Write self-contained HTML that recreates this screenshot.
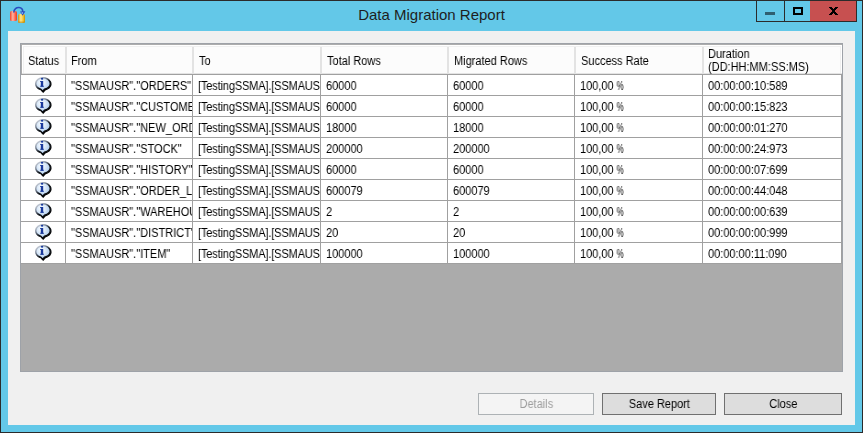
<!DOCTYPE html>
<html><head><meta charset="utf-8"><style>
html,body{margin:0;padding:0;width:863px;height:433px;overflow:hidden;background:#f0f0f0;}
body>div,#w>div{position:absolute;}
#w{position:absolute;left:0;top:0;width:863px;height:433px;}
#w div{position:absolute;}
#w div span{position:static;}
.g{display:inline-block;font-size:12px;transform:scaleX(0.9167);transform-origin:0 0;will-change:transform;}
.t{font-family:"Liberation Sans",sans-serif;color:#000;white-space:nowrap;}
svg{display:block;}
</style></head><body><div id="w">
<div style="left:0px;top:0px;width:863px;height:433px;background:#2b2b2b;"></div>
<div style="left:1px;top:1px;width:861px;height:431px;background:#63c8e8;"></div>
<div style="left:8px;top:31px;width:847px;height:394px;background:#f0f0f0;"></div>
<div class="t" style="left:0;top:5px;width:863px;text-align:center;font-size:15px;color:#1e1e1e;line-height:20px;">Data Migration Report</div>
<div style="left:756px;top:0px;width:101px;height:22px;background:#2b2b2b;"></div>
<div style="left:757px;top:1px;width:27px;height:20px;background:#63c8e8;"></div>
<div style="left:785px;top:1px;width:25px;height:20px;background:#63c8e8;"></div>
<div style="left:810px;top:1px;width:46px;height:20px;background:#c75050;"></div>
<div style="left:765px;top:12px;width:10px;height:3px;background:#2f5f70;"></div>
<div style="left:793px;top:7px;width:10px;height:8px;background:transparent;border:2px solid #000;box-sizing:border-box;"></div>
<svg style="position:absolute;left:829px;top:7px" width="9" height="8" viewBox="0 0 9 8" shape-rendering="crispEdges" fill="#000"><rect x="0" y="0" width="3" height="1"/><rect x="6" y="0" width="3" height="1"/><rect x="1" y="1" width="3" height="1"/><rect x="5" y="1" width="3" height="1"/><rect x="2" y="2" width="5" height="1"/><rect x="3" y="3" width="3" height="1"/><rect x="3" y="4" width="3" height="1"/><rect x="2" y="5" width="5" height="1"/><rect x="1" y="6" width="3" height="1"/><rect x="5" y="6" width="3" height="1"/><rect x="0" y="7" width="3" height="1"/><rect x="6" y="7" width="3" height="1"/></svg>
<svg style="position:absolute;left:8px;top:6px" width="20" height="18" viewBox="0 0 20 18"><defs><linearGradient id="rd" x1="0" x2="1"><stop offset="0" stop-color="#f04424"/><stop offset="0.4" stop-color="#ffb4a4"/><stop offset="0.75" stop-color="#ff6448"/><stop offset="1" stop-color="#e63c22"/></linearGradient><linearGradient id="yl" x1="0" x2="1"><stop offset="0" stop-color="#cc9412"/><stop offset="0.4" stop-color="#ffe88c"/><stop offset="0.75" stop-color="#f2c232"/><stop offset="1" stop-color="#c48a00"/></linearGradient></defs><rect x="2" y="5" width="7" height="10" rx="1.6" fill="url(#rd)"/><rect x="10" y="8" width="7" height="9" rx="1.6" fill="url(#yl)"/><rect x="10.5" y="15.6" width="6" height="1.2" fill="#b07800" opacity="0.6"/><path d="M5.8 6.6C5.8 2.8 8.6 1.3 11 1.5C13.4 1.7 14.8 3.4 14.8 6" stroke="#2a4cc0" stroke-width="1.6" fill="none"/><path d="M12 5.6L17.4 5.3L14.6 9.8Z" fill="#2a4cc0"/><circle cx="14.3" cy="7" r="0.9" fill="#7aa8f0"/></svg>
<div style="left:20px;top:43px;width:823px;height:329px;background:#9ea2a8;"></div>
<div style="left:21px;top:44px;width:821px;height:327px;background:#ababab;"></div>
<div style="left:21px;top:44px;width:821px;height:31px;background:#fcfcfc;"></div>
<div style="left:21px;top:44px;width:821px;height:1px;background:#adadad;"></div>
<div style="left:21px;top:44px;width:1px;height:30px;background:#adadad;"></div>
<div style="left:22px;top:45px;width:820px;height:1px;background:#ffffff;"></div>
<div style="left:22px;top:45px;width:1px;height:28px;background:#ffffff;"></div>
<div style="left:23px;top:46px;width:817px;height:1px;background:#f0f0f0;"></div>
<div style="left:23px;top:46px;width:1px;height:27px;background:#f0f0f0;"></div>
<div style="left:840px;top:46px;width:1px;height:27px;background:#f0f0f0;"></div>
<div style="left:841px;top:45px;width:1px;height:28px;background:#ffffff;"></div>
<div style="left:22px;top:73px;width:820px;height:1px;background:#e3e3e3;"></div>
<div style="left:21px;top:74px;width:821px;height:1px;background:#a0a0a0;"></div>
<div style="left:65px;top:47px;width:2px;height:26px;background:#e3e3e3;"></div>
<div style="left:192px;top:47px;width:2px;height:26px;background:#e3e3e3;"></div>
<div style="left:320px;top:47px;width:2px;height:26px;background:#e3e3e3;"></div>
<div style="left:447px;top:47px;width:2px;height:26px;background:#e3e3e3;"></div>
<div style="left:574px;top:47px;width:2px;height:26px;background:#e3e3e3;"></div>
<div style="left:702px;top:47px;width:2px;height:26px;background:#e3e3e3;"></div>
<div style="left:21px;top:75px;width:820px;height:20px;background:#ffffff;"></div>
<div style="left:21px;top:95px;width:821px;height:1px;background:#a0a0a0;"></div>
<div style="left:21px;top:96px;width:820px;height:20px;background:#ffffff;"></div>
<div style="left:21px;top:116px;width:821px;height:1px;background:#a0a0a0;"></div>
<div style="left:21px;top:117px;width:820px;height:20px;background:#ffffff;"></div>
<div style="left:21px;top:137px;width:821px;height:1px;background:#a0a0a0;"></div>
<div style="left:21px;top:138px;width:820px;height:20px;background:#ffffff;"></div>
<div style="left:21px;top:158px;width:821px;height:1px;background:#a0a0a0;"></div>
<div style="left:21px;top:159px;width:820px;height:20px;background:#ffffff;"></div>
<div style="left:21px;top:179px;width:821px;height:1px;background:#a0a0a0;"></div>
<div style="left:21px;top:180px;width:820px;height:20px;background:#ffffff;"></div>
<div style="left:21px;top:200px;width:821px;height:1px;background:#a0a0a0;"></div>
<div style="left:21px;top:201px;width:820px;height:20px;background:#ffffff;"></div>
<div style="left:21px;top:221px;width:821px;height:1px;background:#a0a0a0;"></div>
<div style="left:21px;top:222px;width:820px;height:20px;background:#ffffff;"></div>
<div style="left:21px;top:242px;width:821px;height:1px;background:#a0a0a0;"></div>
<div style="left:21px;top:243px;width:820px;height:20px;background:#ffffff;"></div>
<div style="left:21px;top:263px;width:821px;height:1px;background:#a0a0a0;"></div>
<div style="left:65px;top:75px;width:1px;height:189px;background:#a0a0a0;"></div>
<div style="left:192px;top:75px;width:1px;height:189px;background:#a0a0a0;"></div>
<div style="left:320px;top:75px;width:1px;height:189px;background:#a0a0a0;"></div>
<div style="left:447px;top:75px;width:1px;height:189px;background:#a0a0a0;"></div>
<div style="left:574px;top:75px;width:1px;height:189px;background:#a0a0a0;"></div>
<div style="left:702px;top:75px;width:1px;height:189px;background:#a0a0a0;"></div>
<div style="left:841px;top:75px;width:1px;height:189px;background:#a0a0a0;"></div>
<div class="t" style="left:28px;top:53px;line-height:13px;"><span class="g">Status</span></div>
<div class="t" style="left:71px;top:53px;line-height:13px;"><span class="g">From</span></div>
<div class="t" style="left:199px;top:53px;line-height:13px;"><span class="g">To</span></div>
<div class="t" style="left:327px;top:53px;line-height:13px;"><span class="g">Total Rows</span></div>
<div class="t" style="left:454px;top:53px;line-height:13px;"><span class="g">Migrated Rows</span></div>
<div class="t" style="left:581px;top:53px;line-height:13px;"><span class="g">Success Rate</span></div>
<div class="t" style="left:708px;top:48px;line-height:13px;"><span class="g">Duration<br>(DD:HH:MM:SS:MS)</span></div>
<div style="left:34px;top:76px;width:18px;height:18px;"><svg width="18" height="18" viewBox="0 0 18 18"><defs><radialGradient id="bg" cx="0.4" cy="0.35" r="0.75"><stop offset="0" stop-color="#ffffff"/><stop offset="0.3" stop-color="#e2eefa"/><stop offset="0.7" stop-color="#b8d2f0"/><stop offset="1" stop-color="#80aae0"/></radialGradient><linearGradient id="st" x1="0.1" y1="0.05" x2="0.8" y2="0.95"><stop offset="0" stop-color="#d8dde6"/><stop offset="0.35" stop-color="#6a7484"/><stop offset="0.58" stop-color="#101418"/><stop offset="1" stop-color="#000"/></linearGradient></defs><path d="M9 1.6C5 1.6 1.7 4.3 1.7 7.6C1.7 10.2 3.7 12.3 6.6 13.1L8.6 15.3L10.6 13.1C13.6 12.5 16.3 10.3 16.3 7.6C16.3 4.3 13 1.6 9 1.6Z" transform="translate(0.6 0.6)" fill="none" stroke="url(#st)" stroke-width="1.4"/><path d="M9 1.6C5 1.6 1.7 4.3 1.7 7.6C1.7 10.2 3.7 12.3 6.6 13.1L8.6 15.3L10.6 13.1C13.6 12.5 16.3 10.3 16.3 7.6C16.3 4.3 13 1.6 9 1.6Z" fill="url(#bg)" stroke="url(#st)" stroke-width="1.4"/><rect x="6.8" y="5" width="2.4" height="5.6" fill="#1a3a9c"/><rect x="6.2" y="5" width="1.5" height="1" fill="#1a3a9c"/><rect x="6.3" y="9.8" width="3.5" height="1" fill="#1a3a9c"/><ellipse cx="8.1" cy="2.7" rx="1.2" ry="1" fill="#1a3a9c"/></svg></div>
<div class="t" style="left:66px;top:75px;width:126px;height:20px;overflow:hidden;white-space:nowrap;line-height:20px;"><span class="g" style="margin-left:5px">&quot;SSMAUSR&quot;.&quot;ORDERS&quot;</span></div>
<div class="t" style="left:193px;top:75px;width:127px;height:20px;overflow:hidden;white-space:nowrap;line-height:20px;"><span class="g" style="margin-left:5px;letter-spacing:-0.15px">[TestingSSMA].[SSMAUSR].[ORDERS]</span></div>
<div class="t" style="left:321px;top:75px;width:126px;height:20px;overflow:hidden;white-space:nowrap;line-height:20px;"><span class="g" style="margin-left:5px">60000</span></div>
<div class="t" style="left:448px;top:75px;width:126px;height:20px;overflow:hidden;white-space:nowrap;line-height:20px;"><span class="g" style="margin-left:5px">60000</span></div>
<div class="t" style="left:575px;top:75px;width:127px;height:20px;overflow:hidden;white-space:nowrap;line-height:20px;"><span class="g" style="margin-left:5px">100,00 <span style="display:inline-block;transform:scaleX(0.72);transform-origin:0 0">%</span></span></div>
<div class="t" style="left:703px;top:75px;width:138px;height:20px;overflow:hidden;white-space:nowrap;line-height:20px;"><span class="g" style="margin-left:5px">00:00:00:10:589</span></div>
<div style="left:34px;top:97px;width:18px;height:18px;"><svg width="18" height="18" viewBox="0 0 18 18"><defs><radialGradient id="bg" cx="0.4" cy="0.35" r="0.75"><stop offset="0" stop-color="#ffffff"/><stop offset="0.3" stop-color="#e2eefa"/><stop offset="0.7" stop-color="#b8d2f0"/><stop offset="1" stop-color="#80aae0"/></radialGradient><linearGradient id="st" x1="0.1" y1="0.05" x2="0.8" y2="0.95"><stop offset="0" stop-color="#d8dde6"/><stop offset="0.35" stop-color="#6a7484"/><stop offset="0.58" stop-color="#101418"/><stop offset="1" stop-color="#000"/></linearGradient></defs><path d="M9 1.6C5 1.6 1.7 4.3 1.7 7.6C1.7 10.2 3.7 12.3 6.6 13.1L8.6 15.3L10.6 13.1C13.6 12.5 16.3 10.3 16.3 7.6C16.3 4.3 13 1.6 9 1.6Z" transform="translate(0.6 0.6)" fill="none" stroke="url(#st)" stroke-width="1.4"/><path d="M9 1.6C5 1.6 1.7 4.3 1.7 7.6C1.7 10.2 3.7 12.3 6.6 13.1L8.6 15.3L10.6 13.1C13.6 12.5 16.3 10.3 16.3 7.6C16.3 4.3 13 1.6 9 1.6Z" fill="url(#bg)" stroke="url(#st)" stroke-width="1.4"/><rect x="6.8" y="5" width="2.4" height="5.6" fill="#1a3a9c"/><rect x="6.2" y="5" width="1.5" height="1" fill="#1a3a9c"/><rect x="6.3" y="9.8" width="3.5" height="1" fill="#1a3a9c"/><ellipse cx="8.1" cy="2.7" rx="1.2" ry="1" fill="#1a3a9c"/></svg></div>
<div class="t" style="left:66px;top:96px;width:126px;height:20px;overflow:hidden;white-space:nowrap;line-height:20px;"><span class="g" style="margin-left:5px">&quot;SSMAUSR&quot;.&quot;CUSTOMER&quot;</span></div>
<div class="t" style="left:193px;top:96px;width:127px;height:20px;overflow:hidden;white-space:nowrap;line-height:20px;"><span class="g" style="margin-left:5px;letter-spacing:-0.15px">[TestingSSMA].[SSMAUSR].[CUSTOMER]</span></div>
<div class="t" style="left:321px;top:96px;width:126px;height:20px;overflow:hidden;white-space:nowrap;line-height:20px;"><span class="g" style="margin-left:5px">60000</span></div>
<div class="t" style="left:448px;top:96px;width:126px;height:20px;overflow:hidden;white-space:nowrap;line-height:20px;"><span class="g" style="margin-left:5px">60000</span></div>
<div class="t" style="left:575px;top:96px;width:127px;height:20px;overflow:hidden;white-space:nowrap;line-height:20px;"><span class="g" style="margin-left:5px">100,00 <span style="display:inline-block;transform:scaleX(0.72);transform-origin:0 0">%</span></span></div>
<div class="t" style="left:703px;top:96px;width:138px;height:20px;overflow:hidden;white-space:nowrap;line-height:20px;"><span class="g" style="margin-left:5px">00:00:00:15:823</span></div>
<div style="left:34px;top:118px;width:18px;height:18px;"><svg width="18" height="18" viewBox="0 0 18 18"><defs><radialGradient id="bg" cx="0.4" cy="0.35" r="0.75"><stop offset="0" stop-color="#ffffff"/><stop offset="0.3" stop-color="#e2eefa"/><stop offset="0.7" stop-color="#b8d2f0"/><stop offset="1" stop-color="#80aae0"/></radialGradient><linearGradient id="st" x1="0.1" y1="0.05" x2="0.8" y2="0.95"><stop offset="0" stop-color="#d8dde6"/><stop offset="0.35" stop-color="#6a7484"/><stop offset="0.58" stop-color="#101418"/><stop offset="1" stop-color="#000"/></linearGradient></defs><path d="M9 1.6C5 1.6 1.7 4.3 1.7 7.6C1.7 10.2 3.7 12.3 6.6 13.1L8.6 15.3L10.6 13.1C13.6 12.5 16.3 10.3 16.3 7.6C16.3 4.3 13 1.6 9 1.6Z" transform="translate(0.6 0.6)" fill="none" stroke="url(#st)" stroke-width="1.4"/><path d="M9 1.6C5 1.6 1.7 4.3 1.7 7.6C1.7 10.2 3.7 12.3 6.6 13.1L8.6 15.3L10.6 13.1C13.6 12.5 16.3 10.3 16.3 7.6C16.3 4.3 13 1.6 9 1.6Z" fill="url(#bg)" stroke="url(#st)" stroke-width="1.4"/><rect x="6.8" y="5" width="2.4" height="5.6" fill="#1a3a9c"/><rect x="6.2" y="5" width="1.5" height="1" fill="#1a3a9c"/><rect x="6.3" y="9.8" width="3.5" height="1" fill="#1a3a9c"/><ellipse cx="8.1" cy="2.7" rx="1.2" ry="1" fill="#1a3a9c"/></svg></div>
<div class="t" style="left:66px;top:117px;width:126px;height:20px;overflow:hidden;white-space:nowrap;line-height:20px;"><span class="g" style="margin-left:5px">&quot;SSMAUSR&quot;.&quot;NEW_ORDER&quot;</span></div>
<div class="t" style="left:193px;top:117px;width:127px;height:20px;overflow:hidden;white-space:nowrap;line-height:20px;"><span class="g" style="margin-left:5px;letter-spacing:-0.15px">[TestingSSMA].[SSMAUSR].[NEW_ORDER]</span></div>
<div class="t" style="left:321px;top:117px;width:126px;height:20px;overflow:hidden;white-space:nowrap;line-height:20px;"><span class="g" style="margin-left:5px">18000</span></div>
<div class="t" style="left:448px;top:117px;width:126px;height:20px;overflow:hidden;white-space:nowrap;line-height:20px;"><span class="g" style="margin-left:5px">18000</span></div>
<div class="t" style="left:575px;top:117px;width:127px;height:20px;overflow:hidden;white-space:nowrap;line-height:20px;"><span class="g" style="margin-left:5px">100,00 <span style="display:inline-block;transform:scaleX(0.72);transform-origin:0 0">%</span></span></div>
<div class="t" style="left:703px;top:117px;width:138px;height:20px;overflow:hidden;white-space:nowrap;line-height:20px;"><span class="g" style="margin-left:5px">00:00:00:01:270</span></div>
<div style="left:34px;top:139px;width:18px;height:18px;"><svg width="18" height="18" viewBox="0 0 18 18"><defs><radialGradient id="bg" cx="0.4" cy="0.35" r="0.75"><stop offset="0" stop-color="#ffffff"/><stop offset="0.3" stop-color="#e2eefa"/><stop offset="0.7" stop-color="#b8d2f0"/><stop offset="1" stop-color="#80aae0"/></radialGradient><linearGradient id="st" x1="0.1" y1="0.05" x2="0.8" y2="0.95"><stop offset="0" stop-color="#d8dde6"/><stop offset="0.35" stop-color="#6a7484"/><stop offset="0.58" stop-color="#101418"/><stop offset="1" stop-color="#000"/></linearGradient></defs><path d="M9 1.6C5 1.6 1.7 4.3 1.7 7.6C1.7 10.2 3.7 12.3 6.6 13.1L8.6 15.3L10.6 13.1C13.6 12.5 16.3 10.3 16.3 7.6C16.3 4.3 13 1.6 9 1.6Z" transform="translate(0.6 0.6)" fill="none" stroke="url(#st)" stroke-width="1.4"/><path d="M9 1.6C5 1.6 1.7 4.3 1.7 7.6C1.7 10.2 3.7 12.3 6.6 13.1L8.6 15.3L10.6 13.1C13.6 12.5 16.3 10.3 16.3 7.6C16.3 4.3 13 1.6 9 1.6Z" fill="url(#bg)" stroke="url(#st)" stroke-width="1.4"/><rect x="6.8" y="5" width="2.4" height="5.6" fill="#1a3a9c"/><rect x="6.2" y="5" width="1.5" height="1" fill="#1a3a9c"/><rect x="6.3" y="9.8" width="3.5" height="1" fill="#1a3a9c"/><ellipse cx="8.1" cy="2.7" rx="1.2" ry="1" fill="#1a3a9c"/></svg></div>
<div class="t" style="left:66px;top:138px;width:126px;height:20px;overflow:hidden;white-space:nowrap;line-height:20px;"><span class="g" style="margin-left:5px">&quot;SSMAUSR&quot;.&quot;STOCK&quot;</span></div>
<div class="t" style="left:193px;top:138px;width:127px;height:20px;overflow:hidden;white-space:nowrap;line-height:20px;"><span class="g" style="margin-left:5px;letter-spacing:-0.15px">[TestingSSMA].[SSMAUSR].[STOCK]</span></div>
<div class="t" style="left:321px;top:138px;width:126px;height:20px;overflow:hidden;white-space:nowrap;line-height:20px;"><span class="g" style="margin-left:5px">200000</span></div>
<div class="t" style="left:448px;top:138px;width:126px;height:20px;overflow:hidden;white-space:nowrap;line-height:20px;"><span class="g" style="margin-left:5px">200000</span></div>
<div class="t" style="left:575px;top:138px;width:127px;height:20px;overflow:hidden;white-space:nowrap;line-height:20px;"><span class="g" style="margin-left:5px">100,00 <span style="display:inline-block;transform:scaleX(0.72);transform-origin:0 0">%</span></span></div>
<div class="t" style="left:703px;top:138px;width:138px;height:20px;overflow:hidden;white-space:nowrap;line-height:20px;"><span class="g" style="margin-left:5px">00:00:00:24:973</span></div>
<div style="left:34px;top:160px;width:18px;height:18px;"><svg width="18" height="18" viewBox="0 0 18 18"><defs><radialGradient id="bg" cx="0.4" cy="0.35" r="0.75"><stop offset="0" stop-color="#ffffff"/><stop offset="0.3" stop-color="#e2eefa"/><stop offset="0.7" stop-color="#b8d2f0"/><stop offset="1" stop-color="#80aae0"/></radialGradient><linearGradient id="st" x1="0.1" y1="0.05" x2="0.8" y2="0.95"><stop offset="0" stop-color="#d8dde6"/><stop offset="0.35" stop-color="#6a7484"/><stop offset="0.58" stop-color="#101418"/><stop offset="1" stop-color="#000"/></linearGradient></defs><path d="M9 1.6C5 1.6 1.7 4.3 1.7 7.6C1.7 10.2 3.7 12.3 6.6 13.1L8.6 15.3L10.6 13.1C13.6 12.5 16.3 10.3 16.3 7.6C16.3 4.3 13 1.6 9 1.6Z" transform="translate(0.6 0.6)" fill="none" stroke="url(#st)" stroke-width="1.4"/><path d="M9 1.6C5 1.6 1.7 4.3 1.7 7.6C1.7 10.2 3.7 12.3 6.6 13.1L8.6 15.3L10.6 13.1C13.6 12.5 16.3 10.3 16.3 7.6C16.3 4.3 13 1.6 9 1.6Z" fill="url(#bg)" stroke="url(#st)" stroke-width="1.4"/><rect x="6.8" y="5" width="2.4" height="5.6" fill="#1a3a9c"/><rect x="6.2" y="5" width="1.5" height="1" fill="#1a3a9c"/><rect x="6.3" y="9.8" width="3.5" height="1" fill="#1a3a9c"/><ellipse cx="8.1" cy="2.7" rx="1.2" ry="1" fill="#1a3a9c"/></svg></div>
<div class="t" style="left:66px;top:159px;width:126px;height:20px;overflow:hidden;white-space:nowrap;line-height:20px;"><span class="g" style="margin-left:5px">&quot;SSMAUSR&quot;.&quot;HISTORY&quot;</span></div>
<div class="t" style="left:193px;top:159px;width:127px;height:20px;overflow:hidden;white-space:nowrap;line-height:20px;"><span class="g" style="margin-left:5px;letter-spacing:-0.15px">[TestingSSMA].[SSMAUSR].[HISTORY]</span></div>
<div class="t" style="left:321px;top:159px;width:126px;height:20px;overflow:hidden;white-space:nowrap;line-height:20px;"><span class="g" style="margin-left:5px">60000</span></div>
<div class="t" style="left:448px;top:159px;width:126px;height:20px;overflow:hidden;white-space:nowrap;line-height:20px;"><span class="g" style="margin-left:5px">60000</span></div>
<div class="t" style="left:575px;top:159px;width:127px;height:20px;overflow:hidden;white-space:nowrap;line-height:20px;"><span class="g" style="margin-left:5px">100,00 <span style="display:inline-block;transform:scaleX(0.72);transform-origin:0 0">%</span></span></div>
<div class="t" style="left:703px;top:159px;width:138px;height:20px;overflow:hidden;white-space:nowrap;line-height:20px;"><span class="g" style="margin-left:5px">00:00:00:07:699</span></div>
<div style="left:34px;top:181px;width:18px;height:18px;"><svg width="18" height="18" viewBox="0 0 18 18"><defs><radialGradient id="bg" cx="0.4" cy="0.35" r="0.75"><stop offset="0" stop-color="#ffffff"/><stop offset="0.3" stop-color="#e2eefa"/><stop offset="0.7" stop-color="#b8d2f0"/><stop offset="1" stop-color="#80aae0"/></radialGradient><linearGradient id="st" x1="0.1" y1="0.05" x2="0.8" y2="0.95"><stop offset="0" stop-color="#d8dde6"/><stop offset="0.35" stop-color="#6a7484"/><stop offset="0.58" stop-color="#101418"/><stop offset="1" stop-color="#000"/></linearGradient></defs><path d="M9 1.6C5 1.6 1.7 4.3 1.7 7.6C1.7 10.2 3.7 12.3 6.6 13.1L8.6 15.3L10.6 13.1C13.6 12.5 16.3 10.3 16.3 7.6C16.3 4.3 13 1.6 9 1.6Z" transform="translate(0.6 0.6)" fill="none" stroke="url(#st)" stroke-width="1.4"/><path d="M9 1.6C5 1.6 1.7 4.3 1.7 7.6C1.7 10.2 3.7 12.3 6.6 13.1L8.6 15.3L10.6 13.1C13.6 12.5 16.3 10.3 16.3 7.6C16.3 4.3 13 1.6 9 1.6Z" fill="url(#bg)" stroke="url(#st)" stroke-width="1.4"/><rect x="6.8" y="5" width="2.4" height="5.6" fill="#1a3a9c"/><rect x="6.2" y="5" width="1.5" height="1" fill="#1a3a9c"/><rect x="6.3" y="9.8" width="3.5" height="1" fill="#1a3a9c"/><ellipse cx="8.1" cy="2.7" rx="1.2" ry="1" fill="#1a3a9c"/></svg></div>
<div class="t" style="left:66px;top:180px;width:126px;height:20px;overflow:hidden;white-space:nowrap;line-height:20px;"><span class="g" style="margin-left:5px">&quot;SSMAUSR&quot;.&quot;ORDER_LINE&quot;</span></div>
<div class="t" style="left:193px;top:180px;width:127px;height:20px;overflow:hidden;white-space:nowrap;line-height:20px;"><span class="g" style="margin-left:5px;letter-spacing:-0.15px">[TestingSSMA].[SSMAUSR].[ORDER_LINE]</span></div>
<div class="t" style="left:321px;top:180px;width:126px;height:20px;overflow:hidden;white-space:nowrap;line-height:20px;"><span class="g" style="margin-left:5px">600079</span></div>
<div class="t" style="left:448px;top:180px;width:126px;height:20px;overflow:hidden;white-space:nowrap;line-height:20px;"><span class="g" style="margin-left:5px">600079</span></div>
<div class="t" style="left:575px;top:180px;width:127px;height:20px;overflow:hidden;white-space:nowrap;line-height:20px;"><span class="g" style="margin-left:5px">100,00 <span style="display:inline-block;transform:scaleX(0.72);transform-origin:0 0">%</span></span></div>
<div class="t" style="left:703px;top:180px;width:138px;height:20px;overflow:hidden;white-space:nowrap;line-height:20px;"><span class="g" style="margin-left:5px">00:00:00:44:048</span></div>
<div style="left:34px;top:202px;width:18px;height:18px;"><svg width="18" height="18" viewBox="0 0 18 18"><defs><radialGradient id="bg" cx="0.4" cy="0.35" r="0.75"><stop offset="0" stop-color="#ffffff"/><stop offset="0.3" stop-color="#e2eefa"/><stop offset="0.7" stop-color="#b8d2f0"/><stop offset="1" stop-color="#80aae0"/></radialGradient><linearGradient id="st" x1="0.1" y1="0.05" x2="0.8" y2="0.95"><stop offset="0" stop-color="#d8dde6"/><stop offset="0.35" stop-color="#6a7484"/><stop offset="0.58" stop-color="#101418"/><stop offset="1" stop-color="#000"/></linearGradient></defs><path d="M9 1.6C5 1.6 1.7 4.3 1.7 7.6C1.7 10.2 3.7 12.3 6.6 13.1L8.6 15.3L10.6 13.1C13.6 12.5 16.3 10.3 16.3 7.6C16.3 4.3 13 1.6 9 1.6Z" transform="translate(0.6 0.6)" fill="none" stroke="url(#st)" stroke-width="1.4"/><path d="M9 1.6C5 1.6 1.7 4.3 1.7 7.6C1.7 10.2 3.7 12.3 6.6 13.1L8.6 15.3L10.6 13.1C13.6 12.5 16.3 10.3 16.3 7.6C16.3 4.3 13 1.6 9 1.6Z" fill="url(#bg)" stroke="url(#st)" stroke-width="1.4"/><rect x="6.8" y="5" width="2.4" height="5.6" fill="#1a3a9c"/><rect x="6.2" y="5" width="1.5" height="1" fill="#1a3a9c"/><rect x="6.3" y="9.8" width="3.5" height="1" fill="#1a3a9c"/><ellipse cx="8.1" cy="2.7" rx="1.2" ry="1" fill="#1a3a9c"/></svg></div>
<div class="t" style="left:66px;top:201px;width:126px;height:20px;overflow:hidden;white-space:nowrap;line-height:20px;"><span class="g" style="margin-left:5px">&quot;SSMAUSR&quot;.&quot;WAREHOUSE&quot;</span></div>
<div class="t" style="left:193px;top:201px;width:127px;height:20px;overflow:hidden;white-space:nowrap;line-height:20px;"><span class="g" style="margin-left:5px;letter-spacing:-0.15px">[TestingSSMA].[SSMAUSR].[WAREHOUSE]</span></div>
<div class="t" style="left:321px;top:201px;width:126px;height:20px;overflow:hidden;white-space:nowrap;line-height:20px;"><span class="g" style="margin-left:5px">2</span></div>
<div class="t" style="left:448px;top:201px;width:126px;height:20px;overflow:hidden;white-space:nowrap;line-height:20px;"><span class="g" style="margin-left:5px">2</span></div>
<div class="t" style="left:575px;top:201px;width:127px;height:20px;overflow:hidden;white-space:nowrap;line-height:20px;"><span class="g" style="margin-left:5px">100,00 <span style="display:inline-block;transform:scaleX(0.72);transform-origin:0 0">%</span></span></div>
<div class="t" style="left:703px;top:201px;width:138px;height:20px;overflow:hidden;white-space:nowrap;line-height:20px;"><span class="g" style="margin-left:5px">00:00:00:00:639</span></div>
<div style="left:34px;top:223px;width:18px;height:18px;"><svg width="18" height="18" viewBox="0 0 18 18"><defs><radialGradient id="bg" cx="0.4" cy="0.35" r="0.75"><stop offset="0" stop-color="#ffffff"/><stop offset="0.3" stop-color="#e2eefa"/><stop offset="0.7" stop-color="#b8d2f0"/><stop offset="1" stop-color="#80aae0"/></radialGradient><linearGradient id="st" x1="0.1" y1="0.05" x2="0.8" y2="0.95"><stop offset="0" stop-color="#d8dde6"/><stop offset="0.35" stop-color="#6a7484"/><stop offset="0.58" stop-color="#101418"/><stop offset="1" stop-color="#000"/></linearGradient></defs><path d="M9 1.6C5 1.6 1.7 4.3 1.7 7.6C1.7 10.2 3.7 12.3 6.6 13.1L8.6 15.3L10.6 13.1C13.6 12.5 16.3 10.3 16.3 7.6C16.3 4.3 13 1.6 9 1.6Z" transform="translate(0.6 0.6)" fill="none" stroke="url(#st)" stroke-width="1.4"/><path d="M9 1.6C5 1.6 1.7 4.3 1.7 7.6C1.7 10.2 3.7 12.3 6.6 13.1L8.6 15.3L10.6 13.1C13.6 12.5 16.3 10.3 16.3 7.6C16.3 4.3 13 1.6 9 1.6Z" fill="url(#bg)" stroke="url(#st)" stroke-width="1.4"/><rect x="6.8" y="5" width="2.4" height="5.6" fill="#1a3a9c"/><rect x="6.2" y="5" width="1.5" height="1" fill="#1a3a9c"/><rect x="6.3" y="9.8" width="3.5" height="1" fill="#1a3a9c"/><ellipse cx="8.1" cy="2.7" rx="1.2" ry="1" fill="#1a3a9c"/></svg></div>
<div class="t" style="left:66px;top:222px;width:126px;height:20px;overflow:hidden;white-space:nowrap;line-height:20px;"><span class="g" style="margin-left:5px">&quot;SSMAUSR&quot;.&quot;DISTRICT&quot;</span></div>
<div class="t" style="left:193px;top:222px;width:127px;height:20px;overflow:hidden;white-space:nowrap;line-height:20px;"><span class="g" style="margin-left:5px;letter-spacing:-0.15px">[TestingSSMA].[SSMAUSR].[DISTRICT]</span></div>
<div class="t" style="left:321px;top:222px;width:126px;height:20px;overflow:hidden;white-space:nowrap;line-height:20px;"><span class="g" style="margin-left:5px">20</span></div>
<div class="t" style="left:448px;top:222px;width:126px;height:20px;overflow:hidden;white-space:nowrap;line-height:20px;"><span class="g" style="margin-left:5px">20</span></div>
<div class="t" style="left:575px;top:222px;width:127px;height:20px;overflow:hidden;white-space:nowrap;line-height:20px;"><span class="g" style="margin-left:5px">100,00 <span style="display:inline-block;transform:scaleX(0.72);transform-origin:0 0">%</span></span></div>
<div class="t" style="left:703px;top:222px;width:138px;height:20px;overflow:hidden;white-space:nowrap;line-height:20px;"><span class="g" style="margin-left:5px">00:00:00:00:999</span></div>
<div style="left:34px;top:244px;width:18px;height:18px;"><svg width="18" height="18" viewBox="0 0 18 18"><defs><radialGradient id="bg" cx="0.4" cy="0.35" r="0.75"><stop offset="0" stop-color="#ffffff"/><stop offset="0.3" stop-color="#e2eefa"/><stop offset="0.7" stop-color="#b8d2f0"/><stop offset="1" stop-color="#80aae0"/></radialGradient><linearGradient id="st" x1="0.1" y1="0.05" x2="0.8" y2="0.95"><stop offset="0" stop-color="#d8dde6"/><stop offset="0.35" stop-color="#6a7484"/><stop offset="0.58" stop-color="#101418"/><stop offset="1" stop-color="#000"/></linearGradient></defs><path d="M9 1.6C5 1.6 1.7 4.3 1.7 7.6C1.7 10.2 3.7 12.3 6.6 13.1L8.6 15.3L10.6 13.1C13.6 12.5 16.3 10.3 16.3 7.6C16.3 4.3 13 1.6 9 1.6Z" transform="translate(0.6 0.6)" fill="none" stroke="url(#st)" stroke-width="1.4"/><path d="M9 1.6C5 1.6 1.7 4.3 1.7 7.6C1.7 10.2 3.7 12.3 6.6 13.1L8.6 15.3L10.6 13.1C13.6 12.5 16.3 10.3 16.3 7.6C16.3 4.3 13 1.6 9 1.6Z" fill="url(#bg)" stroke="url(#st)" stroke-width="1.4"/><rect x="6.8" y="5" width="2.4" height="5.6" fill="#1a3a9c"/><rect x="6.2" y="5" width="1.5" height="1" fill="#1a3a9c"/><rect x="6.3" y="9.8" width="3.5" height="1" fill="#1a3a9c"/><ellipse cx="8.1" cy="2.7" rx="1.2" ry="1" fill="#1a3a9c"/></svg></div>
<div class="t" style="left:66px;top:243px;width:126px;height:20px;overflow:hidden;white-space:nowrap;line-height:20px;"><span class="g" style="margin-left:5px">&quot;SSMAUSR&quot;.&quot;ITEM&quot;</span></div>
<div class="t" style="left:193px;top:243px;width:127px;height:20px;overflow:hidden;white-space:nowrap;line-height:20px;"><span class="g" style="margin-left:5px;letter-spacing:-0.15px">[TestingSSMA].[SSMAUSR].[ITEM]</span></div>
<div class="t" style="left:321px;top:243px;width:126px;height:20px;overflow:hidden;white-space:nowrap;line-height:20px;"><span class="g" style="margin-left:5px">100000</span></div>
<div class="t" style="left:448px;top:243px;width:126px;height:20px;overflow:hidden;white-space:nowrap;line-height:20px;"><span class="g" style="margin-left:5px">100000</span></div>
<div class="t" style="left:575px;top:243px;width:127px;height:20px;overflow:hidden;white-space:nowrap;line-height:20px;"><span class="g" style="margin-left:5px">100,00 <span style="display:inline-block;transform:scaleX(0.72);transform-origin:0 0">%</span></span></div>
<div class="t" style="left:703px;top:243px;width:138px;height:20px;overflow:hidden;white-space:nowrap;line-height:20px;"><span class="g" style="margin-left:5px">00:00:00:11:090</span></div>
<div style="left:478px;top:393px;width:116px;height:22px;background:#f4f4f4;border:1px solid #adb2b5;box-sizing:border-box;"></div><div class="t" style="left:478px;top:392px;width:116px;height:22px;line-height:22px;text-align:center;color:#9d9d9d;"><span class="g" style="transform-origin:50% 0">Details</span></div>
<div style="left:602px;top:393px;width:114px;height:22px;background:#dddddd;border:1px solid #707070;box-sizing:border-box;"></div><div class="t" style="left:602px;top:392px;width:114px;height:22px;line-height:22px;text-align:center;color:#000;"><span class="g" style="transform-origin:50% 0">Save Report</span></div>
<div style="left:724px;top:393px;width:118px;height:22px;background:#dddddd;border:1px solid #707070;box-sizing:border-box;"></div><div class="t" style="left:724px;top:392px;width:118px;height:22px;line-height:22px;text-align:center;color:#000;"><span class="g" style="transform-origin:50% 0">Close</span></div>
</div></body></html>
